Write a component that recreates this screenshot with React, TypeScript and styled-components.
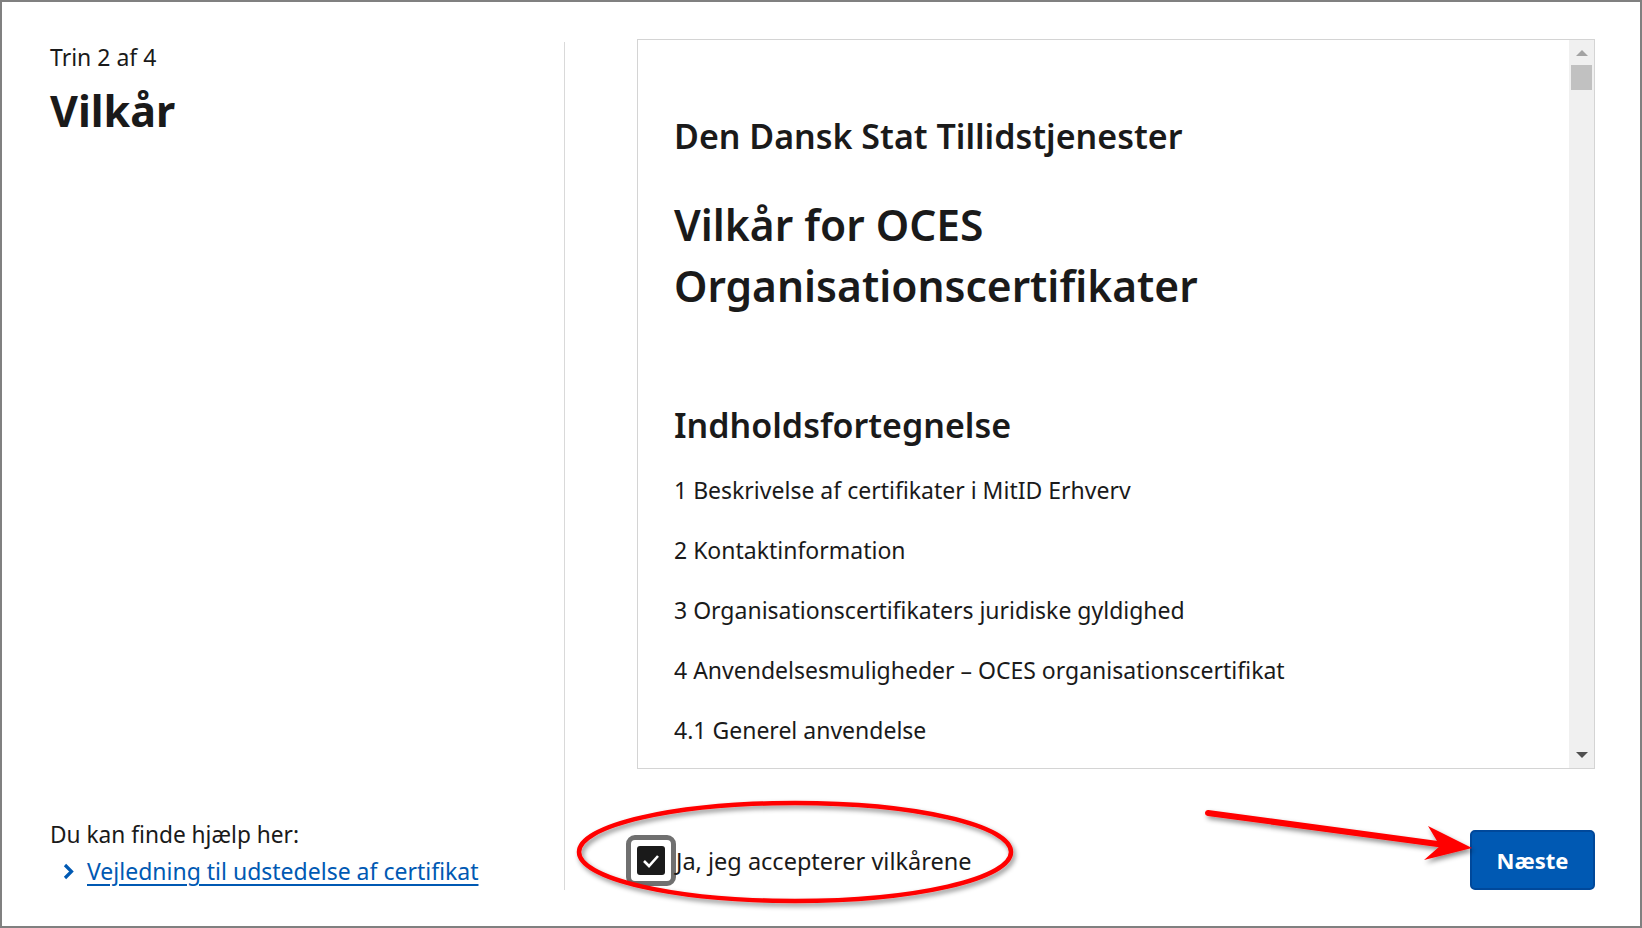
import styled, { createGlobalStyle } from 'styled-components'

const GlobalStyle = createGlobalStyle`
  html, body {
    margin: 0;
    padding: 0;
    background: #ffffff;
  }
  body {
    font-family: "Noto Sans", "Open Sans", Arial, sans-serif;
    color: #1a1a1a;
  }
`

const Frame = styled.div`
  position: relative;
  box-sizing: border-box;
  width: 1642px;
  height: 928px;
  border: 2px solid #808080;
  padding: 37px 45px 36px 48px;
  display: grid;
  grid-template-columns: 514px 1px 1fr;
`

const Side = styled.div`
  display: flex;
  flex-direction: column;
  justify-content: space-between;
`

const StepLabel = styled.div`
  font-size: 23px;
  line-height: 32px;
  margin-top: 2px;
`

const PageTitle = styled.h1`
  margin: 12px 0 0;
  font-size: 43px;
  line-height: 52px;
  font-weight: 700;
`

const HelpText = styled.div`
  font-size: 22.7px;
  line-height: 34px;
`

const HelpLink = styled.a`
  display: flex;
  align-items: center;
  gap: 13px;
  padding-left: 13px;
  font-size: 23px;
  line-height: 38px;
  color: #0059b3;
  text-decoration: underline;
  text-underline-offset: 4px;
`

const Divider = styled.div`
  background: #d9d9d9;
  margin-top: 3px;
`

const Main = styled.div`
  display: flex;
  flex-direction: column;
  justify-content: space-between;
  padding-left: 72px;
`

const ScrollBox = styled.div`
  display: flex;
  height: 730px;
  border: 1px solid #d4d4d4;
  box-sizing: border-box;
  overflow: hidden;
`

const Terms = styled.div`
  flex: 1;
  overflow: hidden;
  padding: 74px 36px 0;
`

const Issuer = styled.h3`
  margin: 0;
  font-size: 34px;
  line-height: 44px;
  font-weight: 600;
`

const TermsTitle = styled.h2`
  margin: 36px 0 0;
  font-size: 42.5px;
  line-height: 61px;
  font-weight: 600;
`

const TocTitle = styled.h3`
  margin: 86px 0 0;
  font-size: 34px;
  line-height: 46px;
  font-weight: 600;
`

const TocItem = styled.p`
  margin: 0;
  font-size: 23px;
  line-height: 60px;
  &:first-of-type {
    margin-top: 12px;
  }
`

const Track = styled.div`
  width: 25px;
  background: #f0f0f0;
  display: flex;
  flex-direction: column;
  align-items: center;
`

const Arrow = styled.div<{ $down?: boolean; $active?: boolean }>`
  width: 0;
  height: 0;
  border-left: 6px solid transparent;
  border-right: 6px solid transparent;
  ${(p) =>
    p.$down
      ? `border-top: 6px solid ${p.$active ? '#505050' : '#a3a3a3'}; margin: auto 0 10px;`
      : `border-bottom: 6px solid ${p.$active ? '#505050' : '#a3a3a3'}; margin-top: 10px;`}
`

const Thumb = styled.div`
  width: 21px;
  height: 25px;
  margin-top: 9px;
  background: #c1c1c1;
`

const Footer = styled.div`
  display: flex;
  align-items: center;
  justify-content: space-between;
  height: 61px;
`

const Consent = styled.label`
  display: flex;
  align-items: center;
  font-size: 23.5px;
  color: #1a1a1a;
  margin-left: -11px;
  margin-top: 2px;
`

const FocusRing = styled.span`
  box-sizing: border-box;
  width: 50px;
  height: 51px;
  border: 5px solid #707070;
  border-radius: 9px;
  display: flex;
  align-items: center;
  justify-content: center;
  background: #fff;
`

const Box = styled.span`
  width: 28px;
  height: 29px;
  border-radius: 3px;
  background: #1a1a1a;
  display: flex;
  align-items: center;
  justify-content: center;
`

const NextButton = styled.button`
  box-sizing: border-box;
  width: 125px;
  height: 60px;
  margin-bottom: -1px;
  background: #0059b3;
  border: 2px solid #00489a;
  border-radius: 5px;
  color: #fff;
  font-family: inherit;
  font-size: 22px;
  font-weight: 700;
`

const Annotations = styled.svg`
  position: absolute;
  top: -2px;
  left: -2px;
  width: 1642px;
  height: 928px;
  pointer-events: none;
`

const toc = [
  '1 Beskrivelse af certifikater i MitID Erhverv',
  '2 Kontaktinformation',
  '3 Organisationscertifikaters juridiske gyldighed',
  '4 Anvendelsesmuligheder – OCES organisationscertifikat',
  '4.1 Generel anvendelse',
]

export default function App() {
  return (
    <>
      <GlobalStyle />
      <Frame>
        <Side>
          <div>
            <StepLabel>Trin 2 af 4</StepLabel>
            <PageTitle>Vilkår</PageTitle>
          </div>
          <div>
            <HelpText>Du kan finde hjælp her:</HelpText>
            <HelpLink href="#">
              <svg width="11" height="17" viewBox="0 0 11 17">
                <polyline points="2,2 8.5,8.5 2,15" fill="none" stroke="#0059b3" strokeWidth="3.2" />
              </svg>
              Vejledning til udstedelse af certifikat
            </HelpLink>
          </div>
        </Side>
        <Divider />
        <Main>
          <ScrollBox>
            <Terms>
              <Issuer>Den Dansk Stat Tillidstjenester</Issuer>
              <TermsTitle>
                Vilkår for OCES
                <br />
                Organisationscertifikater
              </TermsTitle>
              <TocTitle>Indholdsfortegnelse</TocTitle>
              {toc.map((t) => (
                <TocItem key={t}>{t}</TocItem>
              ))}
            </Terms>
            <Track>
              <Arrow />
              <Thumb />
              <Arrow $down $active />
            </Track>
          </ScrollBox>
          <Footer>
            <Consent>
              <FocusRing>
                <Box>
                  <svg width="18" height="14" viewBox="0 0 18 14">
                    <polyline points="2,7 7,12 16,2" fill="none" stroke="#fff" strokeWidth="2.6" />
                  </svg>
                </Box>
              </FocusRing>
              Ja, jeg accepterer vilkårene
            </Consent>
            <NextButton>Næste</NextButton>
          </Footer>
        </Main>
        <Annotations viewBox="0 0 1642 928">
          <defs>
            <filter id="shadow" x="-10%" y="-30%" width="120%" height="160%">
              <feDropShadow dx="2" dy="3" stdDeviation="2.5" floodColor="#000" floodOpacity="0.45" />
            </filter>
          </defs>
          <ellipse cx="795" cy="852" rx="216" ry="49" fill="none" stroke="#ff0000" strokeWidth="4.5" filter="url(#shadow)" />
          <g filter="url(#shadow)">
            <line x1="1208" y1="813" x2="1445" y2="845" stroke="#ff0000" strokeWidth="6" strokeLinecap="round" />
            <polygon points="1428,826 1472,848 1424,860 1440,846" fill="#ff0000" />
          </g>
        </Annotations>
      </Frame>
    </>
  )
}
